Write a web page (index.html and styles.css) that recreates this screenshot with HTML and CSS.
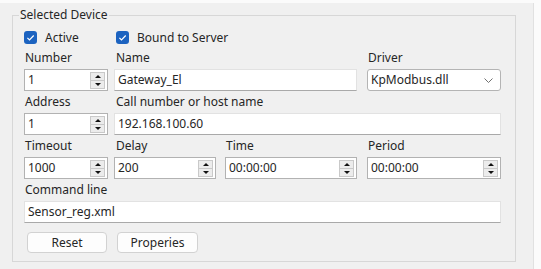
FILE: index.html
```html
<!DOCTYPE html>
<html lang="en">
<head>
    <meta charset="UTF-8">
    <title>Selected Device</title>
    <link rel="stylesheet" href="styles.css">
</head>
<body>
    <div class="panel">
        <fieldset class="group">
            <legend>Selected Device</legend>
            <div class="inner">
                <div class="checks">
                    <label class="check check-first">
                        <span class="box">
                            <svg width="13" height="13" viewBox="0 0 13 13"><path d="M3.4 6.8l2.1 2.1 4.2-4.4" fill="none" stroke="#fff" stroke-width="1.2"/></svg>
                        </span>
                        Active
                    </label>
                    <label class="check">
                        <span class="box">
                            <svg width="13" height="13" viewBox="0 0 13 13"><path d="M3.4 6.8l2.1 2.1 4.2-4.4" fill="none" stroke="#fff" stroke-width="1.2"/></svg>
                        </span>
                        Bound to Server
                    </label>
                </div>

                <div class="fields">
                    <div class="field gap-a">
                        <span class="lbl">Number</span>
                        <div class="spin"><span class="val">1</span><span class="arrows"><span class="up"></span><span class="down"></span></span></div>
                    </div>
                    <div class="field span-2 gap-c">
                        <span class="lbl">Name</span>
                        <div class="text">Gateway_El</div>
                    </div>
                    <div class="field">
                        <span class="lbl">Driver</span>
                        <div class="combo">
                            <span>KpModbus.dll</span>
                            <svg width="9" height="5" viewBox="0 0 9 5"><path d="M0.5 0.5l4 4 4-4" fill="none" stroke="#707070" stroke-width="1"/></svg>
                        </div>
                    </div>

                    <div class="field gap-a">
                        <span class="lbl">Address</span>
                        <div class="spin"><span class="val">1</span><span class="arrows"><span class="up"></span><span class="down"></span></span></div>
                    </div>
                    <div class="field span-3">
                        <span class="lbl">Call number or host name</span>
                        <div class="text">192.168.100.60</div>
                    </div>

                    <div class="field gap-a">
                        <span class="lbl">Timeout</span>
                        <div class="spin"><span class="val">1000</span><span class="arrows"><span class="up"></span><span class="down"></span></span></div>
                    </div>
                    <div class="field gap-b">
                        <span class="lbl">Delay</span>
                        <div class="spin"><span class="val">200</span><span class="arrows"><span class="up"></span><span class="down"></span></span></div>
                    </div>
                    <div class="field gap-c">
                        <span class="lbl">Time</span>
                        <div class="spin"><span class="val">00:00:00</span><span class="arrows"><span class="up"></span><span class="down"></span></span></div>
                    </div>
                    <div class="field">
                        <span class="lbl">Period</span>
                        <div class="spin"><span class="val">00:00:00</span><span class="arrows"><span class="up"></span><span class="down"></span></span></div>
                    </div>

                    <div class="field span-4">
                        <span class="lbl">Command line</span>
                        <div class="text">Sensor_reg.xml</div>
                    </div>
                </div>

                <div class="buttons">
                    <button class="btn">Reset</button>
                    <button class="btn btn-wide">Properies</button>
                </div>
            </div>
        </fieldset>
    </div>
</body>
</html>
```

FILE: styles.css
```css
* {
    box-sizing: border-box;
}
body {
    margin: 0;
    background: #fbfbfb;
    font-family: "Segoe UI", "Noto Sans", sans-serif;
    font-size: 12px;
    color: #262626;
}
.panel {
    width: 534px;
    height: 266px;
    margin-top: 3px;
    padding: 4px 0 0 12px;
    background: #f0f0f0;
    border-right: 1px solid #e1e1e1;
}
.group {
    margin: 0;
    width: 504px;
    padding: 0 13px 8px 6px;
    border: 1px solid #d7d7d7;
}
.group legend {
    padding: 0 1px;
    line-height: 16px;
}
.inner {
    padding-left: 5px;
}
.checks {
    display: flex;
    align-items: center;
    height: 20px;
    margin-top: 4px;
}
.check {
    display: flex;
    align-items: center;
}
.check-first {
    width: 92px;
}
.box {
    width: 13px;
    height: 13px;
    margin-right: 8px;
    border-radius: 3px;
    background: #1c63c0;
}
.box svg {
    display: block;
}

/* columns: 84 | 6 | 102 | 9 | 132 | 10 | 134 */
.fields {
    display: grid;
    grid-template-columns: 90px 111px 142px 134px;
}
.gap-a { padding-right: 6px; }
.gap-b { padding-right: 9px; }
.gap-c { padding-right: 10px; }
.span-2 { grid-column: span 2; }
.span-3 { grid-column: span 3; }
.span-4 { grid-column: span 4; }
.lbl {
    display: block;
    height: 22px;
    padding: 3px 0 0 1px;
    line-height: 16px;
}
.span-2 .lbl,
.span-3 .lbl,
.gap-b .lbl {
    padding-left: 2px;
}
.text,
.spin,
.combo {
    height: 22px;
    line-height: 20px;
    padding-left: 3px;
    background: #fff;
    white-space: nowrap;
}
.text {
    border: 1px solid #e2e2e2;
    border-bottom-color: #a9a9a9;
}
.spin {
    display: flex;
    align-items: center;
    justify-content: space-between;
    padding-right: 2px;
    border: 1px solid #b2b2b2;
}
.arrows {
    display: flex;
    flex-direction: column;
    width: 15px;
    height: 17px;
    border: 1px solid #c9c9c9;
    background: #ececec;
}
.arrows span {
    flex: 1;
    display: flex;
    align-items: center;
    justify-content: center;
}
.arrows .up {
    border-bottom: 1px solid #c9c9c9;
}
.arrows .up::before,
.arrows .down::before {
    content: "";
    border-left: 3px solid transparent;
    border-right: 3px solid transparent;
}
.arrows .up::before {
    border-bottom: 3px solid #111;
}
.arrows .down::before {
    border-top: 3px solid #111;
}
.combo {
    display: flex;
    align-items: center;
    justify-content: space-between;
    padding-right: 7px;
    border: 1px solid #b4b4b4;
    border-radius: 3px;
}
.combo svg {
    display: block;
}
.buttons {
    display: flex;
    gap: 10px;
    margin-top: 9px;
    padding-left: 3px;
}
.btn {
    width: 80px;
    height: 21px;
    padding: 0;
    font: inherit;
    color: inherit;
    background: #fdfdfd;
    border: 1px solid #d2d2d2;
    border-radius: 4px;
}
.btn-wide {
    width: 81px;
}
```
